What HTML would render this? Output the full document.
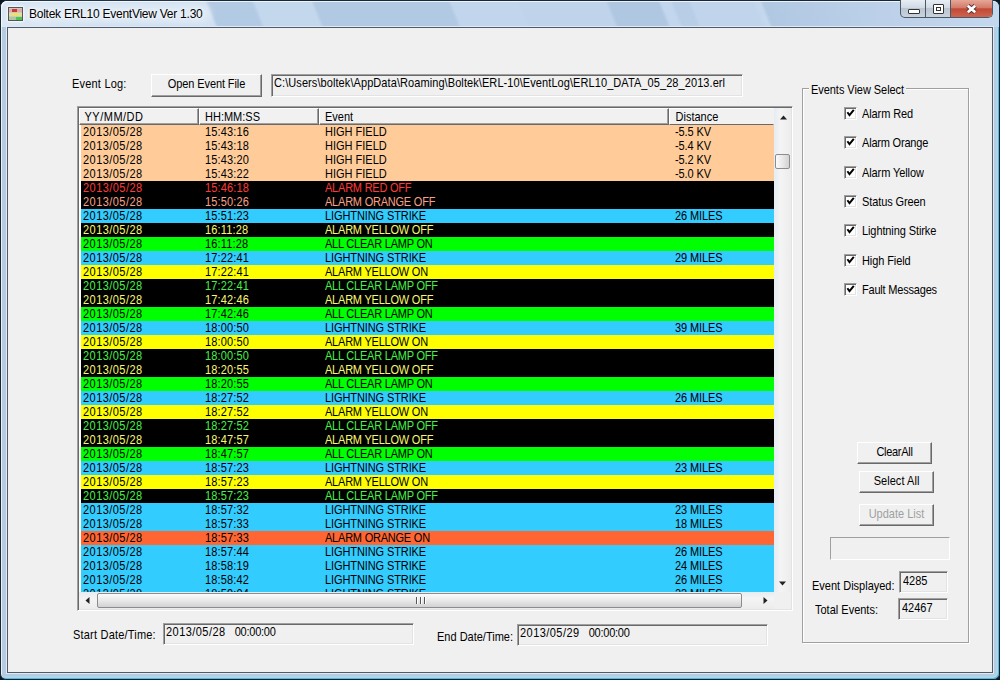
<!DOCTYPE html>
<html><head><meta charset="utf-8">
<style>
*{margin:0;padding:0;box-sizing:border-box}
html,body{width:1000px;height:680px;overflow:hidden;background:#0b1620}
body{position:relative;font-family:"Liberation Sans",sans-serif;font-size:11px;color:#000}
.abs{position:absolute}
#frame{position:absolute;left:0;top:0;width:1000px;height:680px;border:1px solid #14283a;border-right-color:#06283e;border-bottom-color:#06283e;border-radius:7px 7px 6px 6px;
 background:#b6cbe0;
 box-shadow:inset 1px 1px 0 rgba(255,255,255,.7), inset -1px -1px 0 #6fb0d0, inset -3px -3px 0 #a8d8ec}
#tbar{position:absolute;left:1px;top:1px;width:998px;height:26px;border-radius:6px 6px 0 0;
 background:linear-gradient(68deg,#dbe7f4 0.0%,#d0e0f1 9.0%,#d0e0f1 21.2%,#b3cae4 21.6%,#b3cae4 25.8%,#c3d7ed 26.2%,#c3d7ed 31.7%,#b2c9e3 32.1%,#b2c9e3 45.3%,#c1d6ec 45.7%,#c1d6ec 52.1%,#bfd4eb 52.5%,#bfd4eb 60.9%,#b0c7e2 61.3%,#b0c7e2 66.1%,#c2d7ed 66.5%,#c2d7ed 67.3%,#b8cee7 67.7%,#b8cee7 69.1%,#c0d5ec 69.5%,#c0d5ec 75.5%,#c3d8ed 75.9%,#c3d8ed 76.2%,#b1c8e3 76.6%,#bcd1e9 88.2%,#c4d8ee 100.2%);
 box-shadow:inset 1px 1px 0 rgba(255,255,255,.75)}
#client{position:absolute;left:7px;top:27px;width:986px;height:646px;border:1px solid #4f5b68;background:#f0f0f0;box-shadow:0 0 0 1px #dfeaf6}
.lbl{position:absolute;white-space:pre;line-height:13px;transform:scaleY(1.125);transform-origin:0 2.3px}
.t{display:inline-block;transform:scaleY(1.125);transform-origin:0 60%}
.btn{position:absolute;background:#f0f0f0;border-style:solid;border-width:1px;border-color:#fff #696969 #696969 #fff;box-shadow:inset -1px -1px 0 #a0a0a0;text-align:center;white-space:pre}
.tb{position:absolute;background:#f0f0f0;border-style:solid;border-width:1px;border-color:#a0a0a0 #fff #fff #a0a0a0;box-shadow:inset 1px 1px 0 #696969, inset -1px -1px 0 #e3e3e3;white-space:pre;overflow:hidden}
.cb{position:absolute;width:13px;height:13px;border-style:solid;border-width:1px;border-color:#a0a0a0 #fff #fff #a0a0a0;background:#fff;box-shadow:inset 1px 1px 0 #696969, inset -1px -1px 0 #e3e3e3}
.cb svg{position:absolute;left:-1px;top:-1px}
#lv{position:absolute;left:77px;top:106px;width:716px;height:505px;border-style:solid;border-width:1px;border-color:#a0a0a0 #fff #fff #a0a0a0;box-shadow:inset 1px 1px 0 #696969, inset -1px -1px 0 #e3e3e3;background:#fff;overflow:hidden}
#hdr{position:absolute;left:1px;top:1px;width:695px;height:17px;background:#f1f1f1}
.hi{position:absolute;top:0;height:17px;border-style:solid;border-width:1px;border-color:#fff #696969 #696969 #fff;box-shadow:inset -1px -1px 0 #a0a0a0;white-space:pre;line-height:13px;padding-top:2px}
#rows{position:absolute;left:3px;top:18px;width:693px;height:467px;overflow:hidden}
.row{position:absolute;left:0;width:693px;height:14px;line-height:13px;white-space:pre}
.row span{position:absolute;top:0;transform:scaleY(1.125);transform-origin:0 2.3px}
.c1{left:2px} .c2{left:124px} .c3{left:244px} .c4{left:594px}
.dg{letter-spacing:0.45px} .c2.dg{letter-spacing:0.15px}
.lt{letter-spacing:-0.1px}
#vs{position:absolute;left:696px;top:1px;width:17px;height:484px;background:linear-gradient(90deg,#e6ecf2,#f4f4f4 40%,#ececec)}
#hs{position:absolute;left:1px;top:485px;width:695px;height:17px;background:linear-gradient(180deg,#e6ecf2,#f4f4f4 40%,#ececec)}
#corner{position:absolute;left:696px;top:485px;width:17px;height:17px;background:#f0f0f0}
.thumbv{position:absolute;border:1px solid #8c8c8c;border-radius:2px;background:linear-gradient(90deg,#fbfbfb,#e9e9e9 50%,#d2d2d2)}
.thumbh{position:absolute;border:1px solid #8c8c8c;border-radius:2px;background:linear-gradient(180deg,#fbfbfb,#e9e9e9 50%,#d2d2d2)}
#gb{position:absolute;left:802px;top:88px;width:167px;height:555px;border:1px solid #a0a0a0;box-shadow:1px 1px 0 #fff, inset 1px 1px 0 #fff}
</style></head><body>
<div id="frame"></div><div id="tbar"></div><div class="abs" style="left:30px;top:8px;width:178px;height:11px;border-radius:6px;background:rgba(238,244,250,.45);box-shadow:0 0 6px 4px rgba(238,244,250,.45)"></div>
<!-- title icon -->
<div class="abs" style="left:8px;top:7px;width:15px;height:14px;border:1px solid #555;background:#cfc9c4;box-shadow:0 0 2px 1px rgba(255,255,255,.8)">
 <div class="abs" style="left:0;top:1px;width:13px;height:3px;background:#e2aaa8"></div>
 <div class="abs" style="left:3px;top:1px;width:5px;height:3px;background:#c83a3a"></div>
 <div class="abs" style="left:0;top:5px;width:13px;height:3px;background:#e4dc98"></div>
 <div class="abs" style="left:5px;top:5px;width:4px;height:3px;background:#efe060"></div>
 <div class="abs" style="left:0;top:9px;width:13px;height:3px;background:#a8cc98"></div>
 <div class="abs" style="left:7px;top:9px;width:6px;height:3px;background:#48c848"></div>
</div>
<div class="lbl" style="transform:none;left:29px;top:7px;font-size:12px;letter-spacing:-0.25px;line-height:15px;color:#000;text-shadow:0 0 6px #fff,0 0 3px #fff">Boltek ERL10 EventView Ver 1.30</div>
<!-- caption buttons -->
<div class="abs" style="left:900px;top:0;width:93px;height:18px;border:1px solid #4a5866;border-top:none;border-radius:0 0 5px 5px;overflow:hidden;background:linear-gradient(180deg,#e7edf3,#d1dae4 45%,#b9c5d2 50%,#c9d3dd)">
 <div class="abs" style="left:24px;top:0;width:1px;height:17px;background:#4a5866"></div>
 <div class="abs" style="left:49px;top:0;width:1px;height:17px;background:#4a5866"></div>
 <div class="abs" style="left:50px;top:0;width:42px;height:17px;background:linear-gradient(180deg,#e6a898,#d47a6a 45%,#c04a36 52%,#cf634e)"></div>
 <div class="abs" style="left:7px;top:9px;width:12px;height:5px;border:1px solid #333;background:#fff;border-radius:1px"></div>
 <div class="abs" style="left:32px;top:4px;width:11px;height:10px;border:1px solid #333;background:#fff;border-radius:1px"><div class="abs" style="left:2px;top:2px;width:5px;height:4px;border:1px solid #333"></div></div>
 <svg class="abs" style="left:64px;top:4px" width="13" height="10" viewBox="0 0 13 10"><path d="M2.8 1.8 L10.2 8.2 M10.2 1.8 L2.8 8.2" stroke="#5a3030" stroke-width="4.6"/><path d="M2.8 1.8 L10.2 8.2 M10.2 1.8 L2.8 8.2" stroke="#fff" stroke-width="2.8"/></svg>
</div>
<div id="client"></div>

<div class="lbl" style="left:72px;top:77px;letter-spacing:0.2px">Event Log:</div>
<div class="btn" style="left:151px;top:74px;width:111px;height:23px;line-height:18px;letter-spacing:-0.1px"><span class="t">Open Event File</span></div>
<div class="tb" style="left:271px;top:74px;width:472px;height:23px;padding:1px 0 0 2px;line-height:15px;letter-spacing:0.08px"><span class="t">C:\Users\boltek\AppData\Roaming\Boltek\ERL-10\EventLog\ERL10_DATA_05_28_2013.erl</span></div>

<div id="lv">
 <div id="hdr">
  <div class="hi" style="left:0;width:120px;padding-left:4.5px;letter-spacing:0.5px"><span class="t">YY/MM/DD</span></div>
  <div class="hi" style="left:120px;width:120px;padding-left:5px"><span class="t">HH:MM:SS</span></div>
  <div class="hi" style="left:240px;width:350px;padding-left:5px"><span class="t">Event</span></div>
  <div class="hi" style="left:590px;width:105px;padding-left:5.5px;border-right-color:#f1f1f1;box-shadow:none"><span class="t">Distance</span></div>
 </div>
 <div id="rows">
<div class="row" style="top:0px;background:#FFCC99;color:#000"><span class="c1 dg">2013/05/28</span><span class="c2 dg">15:43:16</span><span class="c3" style="letter-spacing:0.0px">HIGH FIELD</span><span class="c4 lt">-5.5 KV</span></div>
<div class="row" style="top:14px;background:#FFCC99;color:#000"><span class="c1 dg">2013/05/28</span><span class="c2 dg">15:43:18</span><span class="c3" style="letter-spacing:0.0px">HIGH FIELD</span><span class="c4 lt">-5.4 KV</span></div>
<div class="row" style="top:28px;background:#FFCC99;color:#000"><span class="c1 dg">2013/05/28</span><span class="c2 dg">15:43:20</span><span class="c3" style="letter-spacing:0.0px">HIGH FIELD</span><span class="c4 lt">-5.2 KV</span></div>
<div class="row" style="top:42px;background:#FFCC99;color:#000"><span class="c1 dg">2013/05/28</span><span class="c2 dg">15:43:22</span><span class="c3" style="letter-spacing:0.0px">HIGH FIELD</span><span class="c4 lt">-5.0 KV</span></div>
<div class="row" style="top:56px;background:#000000;color:#FF3838"><span class="c1 dg">2013/05/28</span><span class="c2 dg">15:46:18</span><span class="c3" style="letter-spacing:-0.22px">ALARM RED OFF</span><span class="c4 lt"></span></div>
<div class="row" style="top:70px;background:#000000;color:#F8A088"><span class="c1 dg">2013/05/28</span><span class="c2 dg">15:50:26</span><span class="c3" style="letter-spacing:-0.22px">ALARM ORANGE OFF</span><span class="c4 lt"></span></div>
<div class="row" style="top:84px;background:#33CCFF;color:#000"><span class="c1 dg">2013/05/28</span><span class="c2 dg">15:51:23</span><span class="c3" style="letter-spacing:-0.1px">LIGHTNING STRIKE</span><span class="c4 lt">26 MILES</span></div>
<div class="row" style="top:98px;background:#000000;color:#F8F870"><span class="c1 dg">2013/05/28</span><span class="c2 dg">16:11:28</span><span class="c3" style="letter-spacing:-0.22px">ALARM YELLOW OFF</span><span class="c4 lt"></span></div>
<div class="row" style="top:112px;background:#00FF00;color:#000"><span class="c1 dg">2013/05/28</span><span class="c2 dg">16:11:28</span><span class="c3" style="letter-spacing:-0.22px">ALL CLEAR LAMP ON</span><span class="c4 lt"></span></div>
<div class="row" style="top:126px;background:#33CCFF;color:#000"><span class="c1 dg">2013/05/28</span><span class="c2 dg">17:22:41</span><span class="c3" style="letter-spacing:-0.1px">LIGHTNING STRIKE</span><span class="c4 lt">29 MILES</span></div>
<div class="row" style="top:140px;background:#FFFF00;color:#000"><span class="c1 dg">2013/05/28</span><span class="c2 dg">17:22:41</span><span class="c3" style="letter-spacing:-0.22px">ALARM YELLOW ON</span><span class="c4 lt"></span></div>
<div class="row" style="top:154px;background:#000000;color:#48F048"><span class="c1 dg">2013/05/28</span><span class="c2 dg">17:22:41</span><span class="c3" style="letter-spacing:-0.22px">ALL CLEAR LAMP OFF</span><span class="c4 lt"></span></div>
<div class="row" style="top:168px;background:#000000;color:#F8F870"><span class="c1 dg">2013/05/28</span><span class="c2 dg">17:42:46</span><span class="c3" style="letter-spacing:-0.22px">ALARM YELLOW OFF</span><span class="c4 lt"></span></div>
<div class="row" style="top:182px;background:#00FF00;color:#000"><span class="c1 dg">2013/05/28</span><span class="c2 dg">17:42:46</span><span class="c3" style="letter-spacing:-0.22px">ALL CLEAR LAMP ON</span><span class="c4 lt"></span></div>
<div class="row" style="top:196px;background:#33CCFF;color:#000"><span class="c1 dg">2013/05/28</span><span class="c2 dg">18:00:50</span><span class="c3" style="letter-spacing:-0.1px">LIGHTNING STRIKE</span><span class="c4 lt">39 MILES</span></div>
<div class="row" style="top:210px;background:#FFFF00;color:#000"><span class="c1 dg">2013/05/28</span><span class="c2 dg">18:00:50</span><span class="c3" style="letter-spacing:-0.22px">ALARM YELLOW ON</span><span class="c4 lt"></span></div>
<div class="row" style="top:224px;background:#000000;color:#48F048"><span class="c1 dg">2013/05/28</span><span class="c2 dg">18:00:50</span><span class="c3" style="letter-spacing:-0.22px">ALL CLEAR LAMP OFF</span><span class="c4 lt"></span></div>
<div class="row" style="top:238px;background:#000000;color:#F8F870"><span class="c1 dg">2013/05/28</span><span class="c2 dg">18:20:55</span><span class="c3" style="letter-spacing:-0.22px">ALARM YELLOW OFF</span><span class="c4 lt"></span></div>
<div class="row" style="top:252px;background:#00FF00;color:#000"><span class="c1 dg">2013/05/28</span><span class="c2 dg">18:20:55</span><span class="c3" style="letter-spacing:-0.22px">ALL CLEAR LAMP ON</span><span class="c4 lt"></span></div>
<div class="row" style="top:266px;background:#33CCFF;color:#000"><span class="c1 dg">2013/05/28</span><span class="c2 dg">18:27:52</span><span class="c3" style="letter-spacing:-0.1px">LIGHTNING STRIKE</span><span class="c4 lt">26 MILES</span></div>
<div class="row" style="top:280px;background:#FFFF00;color:#000"><span class="c1 dg">2013/05/28</span><span class="c2 dg">18:27:52</span><span class="c3" style="letter-spacing:-0.22px">ALARM YELLOW ON</span><span class="c4 lt"></span></div>
<div class="row" style="top:294px;background:#000000;color:#48F048"><span class="c1 dg">2013/05/28</span><span class="c2 dg">18:27:52</span><span class="c3" style="letter-spacing:-0.22px">ALL CLEAR LAMP OFF</span><span class="c4 lt"></span></div>
<div class="row" style="top:308px;background:#000000;color:#F8F870"><span class="c1 dg">2013/05/28</span><span class="c2 dg">18:47:57</span><span class="c3" style="letter-spacing:-0.22px">ALARM YELLOW OFF</span><span class="c4 lt"></span></div>
<div class="row" style="top:322px;background:#00FF00;color:#000"><span class="c1 dg">2013/05/28</span><span class="c2 dg">18:47:57</span><span class="c3" style="letter-spacing:-0.22px">ALL CLEAR LAMP ON</span><span class="c4 lt"></span></div>
<div class="row" style="top:336px;background:#33CCFF;color:#000"><span class="c1 dg">2013/05/28</span><span class="c2 dg">18:57:23</span><span class="c3" style="letter-spacing:-0.1px">LIGHTNING STRIKE</span><span class="c4 lt">23 MILES</span></div>
<div class="row" style="top:350px;background:#FFFF00;color:#000"><span class="c1 dg">2013/05/28</span><span class="c2 dg">18:57:23</span><span class="c3" style="letter-spacing:-0.22px">ALARM YELLOW ON</span><span class="c4 lt"></span></div>
<div class="row" style="top:364px;background:#000000;color:#48F048"><span class="c1 dg">2013/05/28</span><span class="c2 dg">18:57:23</span><span class="c3" style="letter-spacing:-0.22px">ALL CLEAR LAMP OFF</span><span class="c4 lt"></span></div>
<div class="row" style="top:378px;background:#33CCFF;color:#000"><span class="c1 dg">2013/05/28</span><span class="c2 dg">18:57:32</span><span class="c3" style="letter-spacing:-0.1px">LIGHTNING STRIKE</span><span class="c4 lt">23 MILES</span></div>
<div class="row" style="top:392px;background:#33CCFF;color:#000"><span class="c1 dg">2013/05/28</span><span class="c2 dg">18:57:33</span><span class="c3" style="letter-spacing:-0.1px">LIGHTNING STRIKE</span><span class="c4 lt">18 MILES</span></div>
<div class="row" style="top:406px;background:#FF6633;color:#000"><span class="c1 dg">2013/05/28</span><span class="c2 dg">18:57:33</span><span class="c3" style="letter-spacing:-0.22px">ALARM ORANGE ON</span><span class="c4 lt"></span></div>
<div class="row" style="top:420px;background:#33CCFF;color:#000"><span class="c1 dg">2013/05/28</span><span class="c2 dg">18:57:44</span><span class="c3" style="letter-spacing:-0.1px">LIGHTNING STRIKE</span><span class="c4 lt">26 MILES</span></div>
<div class="row" style="top:434px;background:#33CCFF;color:#000"><span class="c1 dg">2013/05/28</span><span class="c2 dg">18:58:19</span><span class="c3" style="letter-spacing:-0.1px">LIGHTNING STRIKE</span><span class="c4 lt">24 MILES</span></div>
<div class="row" style="top:448px;background:#33CCFF;color:#000"><span class="c1 dg">2013/05/28</span><span class="c2 dg">18:58:42</span><span class="c3" style="letter-spacing:-0.1px">LIGHTNING STRIKE</span><span class="c4 lt">26 MILES</span></div>
<div class="row" style="top:462px;background:#33CCFF;color:#000"><span class="c1 dg">2013/05/28</span><span class="c2 dg">18:59:04</span><span class="c3" style="letter-spacing:-0.1px">LIGHTNING STRIKE</span><span class="c4 lt">23 MILES</span></div>
 </div>
 <div id="vs">
  <svg class="abs" style="left:6px;top:7px" width="8" height="5"><path d="M0 4.5 L3.5 0.5 L7 4.5 Z" fill="#222"/></svg>
  <div class="thumbv" style="left:1px;top:46px;width:15px;height:15px"></div>
  <svg class="abs" style="left:5px;top:473px" width="8" height="5"><path d="M0 0.5 L3.5 4.5 L7 0.5 Z" fill="#222"/></svg>
 </div>
 <div id="hs">
  <svg class="abs" style="left:6px;top:5px" width="5" height="8"><path d="M4.5 0 L0.5 3.5 L4.5 7 Z" fill="#222"/></svg>
  <div class="thumbh" style="left:18px;top:1px;width:645px;height:15px">
   <div class="abs" style="left:318px;top:3px;width:1px;height:7px;background:#555;box-shadow:1px 0 0 #fff"></div>
   <div class="abs" style="left:322px;top:3px;width:1px;height:7px;background:#555;box-shadow:1px 0 0 #fff"></div>
   <div class="abs" style="left:326px;top:3px;width:1px;height:7px;background:#555;box-shadow:1px 0 0 #fff"></div>
  </div>
  <svg class="abs" style="left:684px;top:5px" width="5" height="8"><path d="M0.5 0 L4.5 3.5 L0.5 7 Z" fill="#222"/></svg>
 </div>
 <div id="corner"></div>
</div>

<div class="lbl" style="left:73px;top:628px;letter-spacing:0.2px">Start Date/Time:</div>
<div class="tb" style="left:163px;top:623px;width:251px;height:22px;padding:1px 0 0 2px;line-height:14px"><span class="t"><span style="letter-spacing:0.45px">2013/05/28</span>   <span style="letter-spacing:-0.25px">00:00:00</span></span></div>
<div class="lbl" style="left:437px;top:630px">End Date/Time:</div>
<div class="tb" style="left:517px;top:624px;width:251px;height:22px;padding:1px 0 0 2px;line-height:14px"><span class="t"><span style="letter-spacing:0.45px">2013/05/29</span>   <span style="letter-spacing:-0.25px">00:00:00</span></span></div>

<div id="gb"></div>
<div class="lbl" style="left:809px;top:83px;background:#f0f0f0;padding:0 2px;letter-spacing:-0.05px">Events View Select</div>
<div class="cb" style="left:844px;top:107px"><svg width="13" height="13" viewBox="0 0 13 13"><path d="M3.4 5.2 L5.5 8.2 L9.8 2.8" stroke="#000" stroke-width="2" fill="none" stroke-linecap="butt"/></svg></div><div class="lbl" style="left:862px;top:107px;letter-spacing:-0.1px">Alarm Red</div>
<div class="cb" style="left:844px;top:136px"><svg width="13" height="13" viewBox="0 0 13 13"><path d="M3.4 5.2 L5.5 8.2 L9.8 2.8" stroke="#000" stroke-width="2" fill="none" stroke-linecap="butt"/></svg></div><div class="lbl" style="left:862px;top:136px;letter-spacing:-0.2px">Alarm Orange</div>
<div class="cb" style="left:844px;top:166px"><svg width="13" height="13" viewBox="0 0 13 13"><path d="M3.4 5.2 L5.5 8.2 L9.8 2.8" stroke="#000" stroke-width="2" fill="none" stroke-linecap="butt"/></svg></div><div class="lbl" style="left:862px;top:166px;letter-spacing:-0.1px">Alarm Yellow</div>
<div class="cb" style="left:844px;top:195px"><svg width="13" height="13" viewBox="0 0 13 13"><path d="M3.4 5.2 L5.5 8.2 L9.8 2.8" stroke="#000" stroke-width="2" fill="none" stroke-linecap="butt"/></svg></div><div class="lbl" style="left:862px;top:195px;letter-spacing:-0.1px">Status Green</div>
<div class="cb" style="left:844px;top:224px"><svg width="13" height="13" viewBox="0 0 13 13"><path d="M3.4 5.2 L5.5 8.2 L9.8 2.8" stroke="#000" stroke-width="2" fill="none" stroke-linecap="butt"/></svg></div><div class="lbl" style="left:862px;top:224px;letter-spacing:-0.1px">Lightning Stirke</div>
<div class="cb" style="left:844px;top:254px"><svg width="13" height="13" viewBox="0 0 13 13"><path d="M3.4 5.2 L5.5 8.2 L9.8 2.8" stroke="#000" stroke-width="2" fill="none" stroke-linecap="butt"/></svg></div><div class="lbl" style="left:862px;top:254px;letter-spacing:-0.1px">High Field</div>
<div class="cb" style="left:844px;top:283px"><svg width="13" height="13" viewBox="0 0 13 13"><path d="M3.4 5.2 L5.5 8.2 L9.8 2.8" stroke="#000" stroke-width="2" fill="none" stroke-linecap="butt"/></svg></div><div class="lbl" style="left:862px;top:283px;letter-spacing:-0.2px">Fault Messages</div>

<div class="btn" style="left:857px;top:442px;width:75px;height:22px;line-height:19px;letter-spacing:-0.3px"><span class="t">ClearAll</span></div>
<div class="btn" style="left:859px;top:471px;width:75px;height:22px;line-height:19px;letter-spacing:0.05px"><span class="t">Select All</span></div>
<div class="btn" style="left:859px;top:504px;width:75px;height:22px;line-height:19px;color:#a0a0a0"><span class="t">Update List</span></div>
<div class="abs" style="left:830px;top:537px;width:120px;height:23px;border-style:solid;border-width:1px;border-color:#a0a0a0 #fff #fff #a0a0a0"></div>
<div class="lbl" style="left:812px;top:579px">Event Displayed:</div>
<div class="tb" style="left:899px;top:571px;width:49px;height:22px;padding:2px 0 0 3px;line-height:14px"><span class="t">4285</span></div>
<div class="lbl" style="left:815px;top:603px">Total Events:</div>
<div class="tb" style="left:898px;top:598px;width:50px;height:22px;padding:2px 0 0 3px;line-height:14px"><span class="t">42467</span></div>
</body></html>
